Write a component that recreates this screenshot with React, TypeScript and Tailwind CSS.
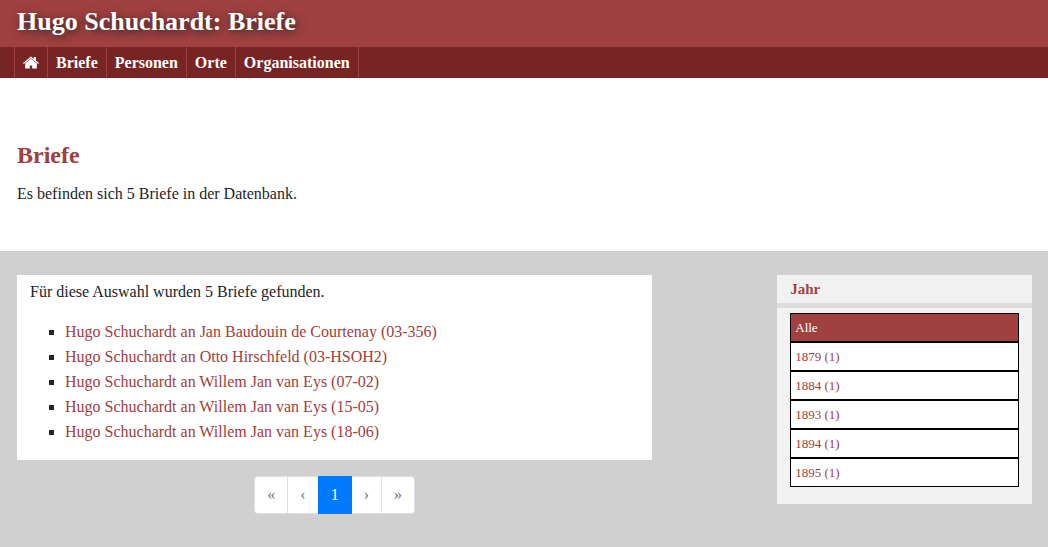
const navItems = ["Briefe", "Personen", "Orte", "Organisationen"];

const letters = [
  "Hugo Schuchardt an Jan Baudouin de Courtenay (03-356)",
  "Hugo Schuchardt an Otto Hirschfeld (03-HSOH2)",
  "Hugo Schuchardt an Willem Jan van Eys (07-02)",
  "Hugo Schuchardt an Willem Jan van Eys (15-05)",
  "Hugo Schuchardt an Willem Jan van Eys (18-06)",
];

const years = ["1879 (1)", "1884 (1)", "1893 (1)", "1894 (1)", "1895 (1)"];

function HomeIcon() {
  return (
    <svg viewBox="0 0 16 13" className="h-[13px] w-4" fill="currentColor" aria-hidden="true">
      <path d="M8 .4 L10.8 2.7 V1 H13 V4.5 L16 7 L15.2 8 L8 2.2 L.8 8 L0 7 Z" />
      <path d="M8 2.7 L13.8 7.4 V12.6 H9.2 V9.6 H6.8 V12.6 H2.2 V7.4 Z" />
    </svg>
  );
}

function Header() {
  return (
    <header>
      <div className="flex h-[47px] items-center bg-[#a04040] px-[17px] pb-1">
        <h1 className="text-[26px] leading-8 font-bold text-white [text-shadow:2px_2px_8px_#222]">
          Hugo Schuchardt: Briefe
        </h1>
      </div>
      <nav className="bg-[#782424] px-[14px]">
        <ul className="flex h-[31px] border-l border-[#a04040] text-base font-bold text-white">
          <li className="flex border-r border-[#a04040]">
            <a href="#start" aria-label="Startseite" className="flex items-center px-2">
              <HomeIcon />
            </a>
          </li>
          {navItems.map((item) => (
            <li key={item} className="flex border-r border-[#a04040]">
              <a href={`#${item}`} className="flex items-center px-2">
                {item}
              </a>
            </li>
          ))}
        </ul>
      </nav>
    </header>
  );
}

function Pagination() {
  return (
    <nav aria-label="Seiten" className="mt-4 flex justify-center">
      <ul className="flex h-[38px] text-base leading-5 text-[#6c757d]">
        <li className="flex">
          <button className="rounded-l border border-[#dee2e6] bg-white px-3">«</button>
        </li>
        <li className="-ml-px flex">
          <button className="border border-[#dee2e6] bg-white px-3">‹</button>
        </li>
        <li className="z-10 -ml-px flex">
          <button aria-current="page" className="border border-[#007bff] bg-[#007bff] px-3 text-white">
            1
          </button>
        </li>
        <li className="-ml-px flex">
          <button className="border border-[#dee2e6] bg-white px-3">›</button>
        </li>
        <li className="-ml-px flex">
          <button className="rounded-r border border-[#dee2e6] bg-white px-3">»</button>
        </li>
      </ul>
    </nav>
  );
}

function YearFilter() {
  return (
    <aside className="w-[25.1%] bg-[#f2f2f2] pb-[17px]">
      <h3 className="border-b-[5px] border-[#dcdcdc] px-[13px] py-1 text-[15px] leading-5 font-bold text-[#a04040]">
        Jahr
      </h3>
      <ul className="mx-[13px] mt-[5px] text-[13px] leading-[27px] text-[#a04040]">
        <li className="border border-black bg-[#a04040] text-white">
          <a href="#alle" className="block px-1">
            Alle
          </a>
        </li>
        {years.map((year) => (
          <li key={year} className="border border-black bg-white">
            <a href="#jahr" className="block px-1">
              {year}
            </a>
          </li>
        ))}
      </ul>
    </aside>
  );
}

export default function App() {
  return (
    <div className="flex min-h-screen flex-col bg-[#d0d0d0] font-['Liberation_Serif',serif] text-base text-[#212529]">
      <Header />
      <section className="bg-white px-[17px] pt-[62px] pb-[45px]">
        <h2 className="text-2xl leading-[30px] font-bold text-[#a04040]">Briefe</h2>
        <p className="mt-3 leading-6">Es befinden sich 5 Briefe in der Datenbank.</p>
      </section>
      <main className="flex items-start justify-between py-6 pr-4 pl-[17px]">
        <div className="w-[62.6%]">
          <section className="bg-white px-[13px] pt-[5px] pb-4">
            <p className="leading-6">Für diese Auswahl wurden 5 Briefe gefunden.</p>
            <ul className="mt-[15px] list-[square] pl-[35px] leading-[25px]">
              {letters.map((letter) => (
                <li key={letter}>
                  <a href="#brief" className="text-[#a04040]">
                    {letter}
                  </a>
                </li>
              ))}
            </ul>
          </section>
          <Pagination />
        </div>
        <YearFilter />
      </main>
    </div>
  );
}
